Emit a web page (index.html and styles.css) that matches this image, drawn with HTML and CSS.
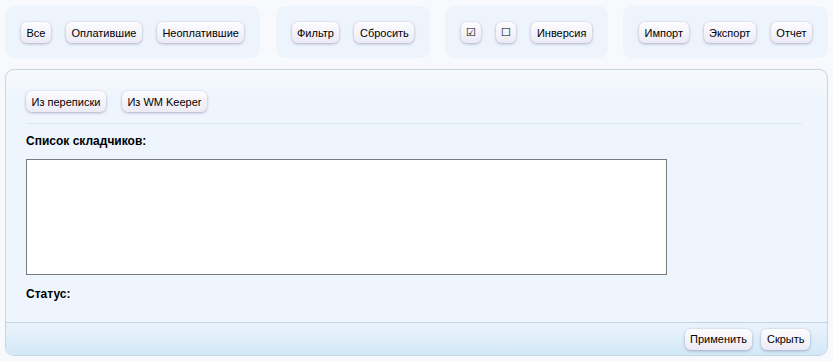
FILE: index.html
```html
<!DOCTYPE html>
<html lang="ru">
<head>
<meta charset="utf-8">
<title>Складчики</title>
<link rel="stylesheet" href="styles.css">
</head>
<body>
<div class="toolbar">
  <div class="group">
    <button class="btn">Все</button>
    <button class="btn">Оплатившие</button>
    <button class="btn">Неоплатившие</button>
  </div>
  <div class="group">
    <button class="btn">Фильтр</button>
    <button class="btn">Сбросить</button>
  </div>
  <div class="group">
    <button class="btn sym">☑</button>
    <button class="btn sym">☐</button>
    <button class="btn">Инверсия</button>
  </div>
  <div class="group">
    <button class="btn">Импорт</button>
    <button class="btn">Экспорт</button>
    <button class="btn">Отчет</button>
  </div>
</div>
<div class="panel">
  <div class="panel-body">
    <div class="row">
      <button class="btn">Из переписки</button>
      <button class="btn">Из WM Keeper</button>
    </div>
    <div class="sep"></div>
    <div class="label">Список складчиков:</div>
    <textarea class="list"></textarea>
    <div class="label status">Статус:</div>
  </div>
  <div class="panel-foot">
    <button class="btn">Применить</button>
    <button class="btn">Скрыть</button>
  </div>
</div>
</body>
</html>
```
FILE: styles.css
```css
html, body { margin: 0; padding: 0; }
body {
  background: #f8f9fd;
  padding: 6px 5px 0 5px;
  font-family: "Liberation Sans", Arial, sans-serif;
  font-size: 11px;
  color: #000;
}
.toolbar {
  display: flex;
  justify-content: space-between;
  width: 823px;
}
.group {
  display: flex;
  gap: 15px;
  background: #eef4fc;
  border-radius: 9px;
  padding: 16px 16px 15px 16px;
}
.btn {
  font-family: "Liberation Sans", Arial, sans-serif;
  font-size: 11px;
  color: #000;
  height: 21px;
  padding: 0 5.5px;
  border: none;
  border-radius: 6px;
  background: linear-gradient(#fdfdff, #eceaf5);
  box-shadow: 0 1px 3px rgba(60, 60, 100, 0.35), 0 0 1px rgba(60,60,100,0.25);
  cursor: pointer;
}
.btn.sym { width: 20px; padding: 0; font-size: 11px; }
.panel {
  margin-top: 11px;
  width: 821px;
  height: 285px;
  border: 1px solid #c9d5e1;
  border-radius: 9px;
  overflow: hidden;
  display: flex;
  flex-direction: column;
  background: linear-gradient(#f7fafd 0, #eef5fd 30px, #eef5fd 100%);
}
.panel-body {
  flex: 1;
  padding: 21px 20px 0 20px;
}
.row { display: flex; gap: 16px; }
.sep {
  height: 1px;
  background: #dbe8f3;
  margin: 11px 5px 0 0;
}
.label {
  font-weight: bold;
  font-size: 12px;
  margin-top: 10px;
  line-height: 14px;
}
.list {
  display: block;
  margin-top: 11px;
  width: 641px;
  height: 116px;
  box-sizing: border-box;
  border: 1px solid #7a7a7a;
  background: #fff;
  resize: none;
  padding: 0;
}
.status { margin-top: 12px; }
.panel-foot {
  height: 32px;
  border-top: 1px solid #bcd6ea;
  background: linear-gradient(#eaf3fc, #d3e8f8);
  display: flex;
  justify-content: flex-end;
  align-items: center;
  gap: 9px;
  padding-right: 17px;
}
```
